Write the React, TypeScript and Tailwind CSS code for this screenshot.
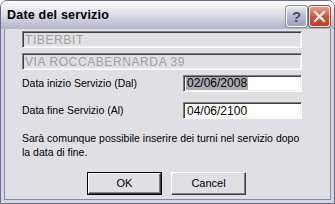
import React from 'react';

const font = { fontFamily: '"Liberation Sans", Arial, sans-serif' };

const Sunken: React.FC<{ className?: string; children?: React.ReactNode }> = ({ className = '', children }) => (
  <div
    className={`h-[17px] border border-t-[#808080] border-l-[#808080] border-b-white border-r-white shadow-[inset_1px_1px_0_#404040,inset_-1px_-1px_0_#f4f3ee] flex items-center pl-[2px] text-[12px] ${className}`}
  >
    {children}
  </div>
);

export default function App() {
  return (
    <div className="w-[335px] h-[204px] bg-white" style={font}>
      <div className="w-[335px] h-[204px] flex flex-col rounded-t-[7px] border border-[#6b6b8d] overflow-hidden">
        {/* Title bar */}
        <div className="h-[28px] shrink-0 flex items-center justify-between bg-gradient-to-b from-[#fdfdfe] via-[#dcdce7] to-[#b3b3c9] pl-[6px] pr-[4px]">
          <span className="text-[12.5px] font-bold text-black tracking-[0.2px] mt-[1px]">Date del servizio</span>
          <div className="flex items-center gap-[2px] mt-[2px]">
            <div className="w-[21px] h-[21px] rounded-[3px] border border-white bg-gradient-to-b from-[#e9e9f2] via-[#b9b9cf] to-[#9f9fba] flex items-center justify-center shadow-[0_0_0_1px_#8a8aa6]">
              <span className="text-[15px] font-bold text-[#4a4a6e] leading-none">?</span>
            </div>
            <div className="w-[21px] h-[21px] rounded-[3px] border border-white bg-gradient-to-b from-[#f09a84] via-[#d9503a] to-[#c33c2a] flex items-center justify-center shadow-[0_0_0_1px_#a04a3a]">
              <svg width="13" height="13" viewBox="0 0 13 13">
                <path d="M2 2 L11 11 M11 2 L2 11" stroke="white" strokeWidth="2.2" strokeLinecap="square" />
              </svg>
            </div>
          </div>
        </div>
        {/* Frame + client */}
        <div className="flex-1 border-x-[3px] border-b-[3px] border-[#d6d6e2]">
          <div className="h-full bg-[#e0dfe3] border-x border-b border-[#8989a6] pl-[17px] pr-[28px] pt-[2px] flex flex-col text-black">
            <Sunken className="text-[#a0a0a0] tracking-[0.6px]">TIBERBIT</Sunken>
            <Sunken className="mt-[5px] text-[#a0a0a0] tracking-[0.6px]">VIA ROCCABERNARDA 39</Sunken>
            <div className="mt-[5px] flex items-center justify-between">
              <span className="text-[10.5px]">Data inizio Servizio (Dal)</span>
              <Sunken className="w-[119px] bg-white">
                <span className="bg-[#a9a9b1] px-[1px] leading-[13px]">02/06/2008</span>
              </Sunken>
            </div>
            <div className="mt-[10px] flex items-center justify-between">
              <span className="text-[10.5px]">Data fine Servizio (Al)</span>
              <Sunken className="w-[119px] bg-white">
                <span className="px-[1px]">04/06/2100</span>
              </Sunken>
            </div>
            <p className="mt-[12px] text-[10.5px] leading-[14px] whitespace-nowrap">
              Sarà comunque possibile inserire dei turni nel servizio dopo
              <br />
              la data di fine.
            </p>
            <div className="mt-[13px] ml-[65px] flex gap-[9px]">
              <div className="w-[75px] h-[23px] border border-black">
                <div className="w-full h-full border border-t-white border-l-white border-b-[#404040] border-r-[#404040] shadow-[inset_-1px_-1px_0_#808080] flex items-center justify-center text-[11px]">
                  OK
                </div>
              </div>
              <div className="w-[75px] h-[23px] border border-t-white border-l-white border-b-[#404040] border-r-[#404040] shadow-[inset_-1px_-1px_0_#808080] flex items-center justify-center text-[11px]">
                Cancel
              </div>
            </div>
          </div>
        </div>
      </div>
    </div>
  );
}
